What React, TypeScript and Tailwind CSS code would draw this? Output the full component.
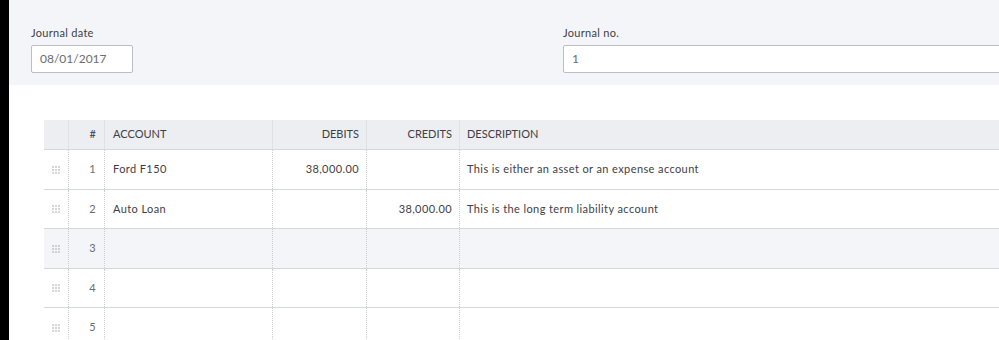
import React from 'react';

const cols = 'grid grid-cols-[25px_36px_168px_94px_93px_1fr]';

const rows = [
  { n: 1, account: 'Ford F150', debit: '38,000.00', credit: '', desc: 'This is either an asset or an expense account', h: 'h-[40px]' },
  { n: 2, account: 'Auto Loan', debit: '', credit: '38,000.00', desc: 'This is the long term liability account', h: 'h-[39px]' },
  { n: 3, account: '', debit: '', credit: '', desc: '', h: 'h-[40px]', active: true },
  { n: 4, account: '', debit: '', credit: '', desc: '', h: 'h-[39px]' },
  { n: 5, account: '', debit: '', credit: '', desc: '', h: 'h-[40px]' },
];

const DragHandle = () => (
  <svg width="8" height="8" viewBox="0 0 8 8" className="text-[#8d9096]">
    {[1, 4, 7].map((y) =>
      [1, 4, 7].map((x) => <rect key={`${x}-${y}`} x={x - 0.6} y={y - 0.6} width="1.2" height="1.2" fill="currentColor" />)
    )}
  </svg>
);

const App: React.FC = () => {
  return (
    <div className="flex h-[340px] w-[999px] overflow-hidden bg-white font-['Lato','Liberation_Sans',sans-serif] text-[#3f4045]">
      <div className="w-[9px] shrink-0 bg-black" />
      <div className="flex-1 min-w-0">
        {/* header fields */}
        <div className="flex h-[85px] bg-[#f4f5f8] pt-[26px] pl-[22px]">
          <div className="w-[532px] shrink-0">
            <label className="block text-[11px] leading-[14px] tracking-[0.3px] mb-[5px]">Journal date</label>
            <div className="flex h-[28px] w-[102px] items-center rounded-[2px] border border-[#babec5] bg-white px-[8px] text-[12px] text-[#6b6c72]">
              08/01/2017
            </div>
          </div>
          <div className="flex-1">
            <label className="block text-[11px] leading-[14px] tracking-[0.3px] mb-[5px]">Journal no.</label>
            <div className="flex h-[28px] w-[500px] items-center rounded-[2px] border border-[#babec5] bg-white px-[8px] text-[12px] text-[#6b6c72]">
              1
            </div>
          </div>
        </div>

        {/* lines table */}
        <div className="pt-[35px] pl-[35px]">
          <div className="w-[1000px] text-[11px]">
            <div className={`${cols} h-[30px] bg-[#eceef1] border-b border-[#d4d7dc] uppercase`}>
              <div className="border-r border-[#dfe1e5]" />
              <div className="flex items-center justify-end pr-[8px] border-r border-[#dfe1e5]">#</div>
              <div className="flex items-center pl-[8px] border-r border-[#dfe1e5]">Account</div>
              <div className="flex items-center justify-end pr-[7px] border-r border-[#dfe1e5]">Debits</div>
              <div className="flex items-center justify-end pr-[7px] border-r border-[#dfe1e5]">Credits</div>
              <div className="flex items-center pl-[7px]">Description</div>
            </div>
            {rows.map((r) => (
              <div
                key={r.n}
                className={`${cols} ${r.h} border-b border-[#d4d7dc] tracking-[0.4px] ${r.active ? 'bg-[#f4f5f8]' : 'bg-white'}`}
              >
                <div className="flex items-center justify-center border-r border-dotted border-[#c9ccd1]">
                  <DragHandle />
                </div>
                <div className="flex items-center justify-end pr-[8px] text-[#6b6c72] border-r border-dotted border-[#c9ccd1]">{r.n}</div>
                <div className="flex items-center pl-[8px] border-r border-dotted border-[#c9ccd1]">{r.account}</div>
                <div className="flex items-center justify-end pr-[7px] border-r border-dotted border-[#c9ccd1]">{r.debit}</div>
                <div className="flex items-center justify-end pr-[7px] border-r border-dotted border-[#c9ccd1]">{r.credit}</div>
                <div className="flex items-center pl-[7px]">{r.desc}</div>
              </div>
            ))}
          </div>
        </div>
      </div>
    </div>
  );
};

export default App;
